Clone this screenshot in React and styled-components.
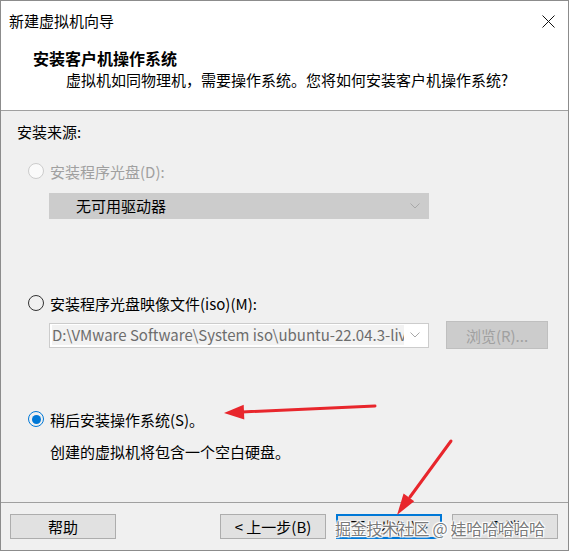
import React from 'react';
import styled, { createGlobalStyle } from 'styled-components';

const Global = createGlobalStyle`
  html, body {
    margin: 0;
    padding: 0;
    background: #ffffff;
  }
  body {
    font-family: "Noto Sans CJK SC", "Noto Sans", sans-serif;
    font-size: 15px;
    color: #000;
  }
`

const Janela = styled.div`
  position: relative;
  box-sizing: border-box;
  width: 569px;
  height: 551px;
  border: 1px solid #8c8c8c;
  display: flex;
  flex-direction: column;
  background: #f0f0f0;
  overflow: hidden;
`

const BarraTitulo = styled.div`
  height: 39px;
  background: #fff;
  display: flex;
  align-items: center;
  justify-content: space-between;
  padding: 0 13px 0 8px;
  font-size: 15px;
  line-height: 20px;
`

const Fechar = styled.svg`
  width: 13px;
  height: 13px;
  margin-top: 2px;
`

const Cabecalho = styled.div`
  height: 70px;
  background: #fff;
  border-bottom: 1px solid #a0a0a0;
  box-sizing: content-box;
  padding: 0 0 0 32px;
`

const Titulo = styled.div`
  font-weight: bold;
  font-size: 16px;
  line-height: 22px;
  margin-top: 7px;
`

const Subtitulo = styled.div`
  font-size: 15px;
  line-height: 22px;
  margin-left: 33px;
`

const Corpo = styled.div`
  flex: 1;
  padding: 10px 0 0 16px;
  display: flex;
  flex-direction: column;
`

const Rotulo = styled.div`
  line-height: 22px;
  margin-top: ${p => p.$top || 0}px;
  margin-left: ${p => p.$left || 0}px;
  color: ${p => (p.$disabled ? '#a0a0a0' : '#000')};
`

const LinhaRadio = styled.div`
  display: flex;
  align-items: center;
  gap: 6px;
  height: 22px;
  margin-top: ${p => p.$top}px;
  margin-left: 11px;
  color: ${p => (p.$disabled ? '#a0a0a0' : '#000')};
`

const Radio = styled.span`
  box-sizing: border-box;
  width: 16px;
  height: 16px;
  border-radius: 50%;
  border: 1px solid ${p => (p.$checked ? '#0078d7' : p.$disabled ? '#cccccc' : '#333')};
  background: ${p => (p.$disabled ? '#fafafa' : 'transparent')};
  display: flex;
  align-items: center;
  justify-content: center;
  &::after {
    content: '';
    display: ${p => (p.$checked ? 'block' : 'none')};
    width: 9px;
    height: 9px;
    border-radius: 50%;
    background: #0078d7;
  }
`

const LinhaCombo = styled.div`
  display: flex;
  align-items: center;
  gap: 17px;
  margin-top: ${p => p.$top}px;
  margin-left: 32px;
`

const Combo = styled.div`
  box-sizing: border-box;
  width: 380px;
  height: ${p => p.$h}px;
  border: 1px solid #cccccc;
  background: ${p => (p.$disabled ? '#cccccc' : '#fff')};
  display: flex;
  align-items: center;
  padding: 0 8px 0 ${p => p.$pad}px;
  line-height: 20px;
  color: ${p => (p.$gray ? '#6d6d6d' : '#000')};
`

const TextoCombo = styled.span`
  flex: 1;
  overflow: hidden;
  white-space: nowrap;
  background: ${p => (p.$fill ? '#f2f2f2' : 'transparent')};
  margin-right: 6px;
`

const Seta = styled.svg`
  width: 10px;
  height: 6px;
  flex: none;
`

const BotaoCinza = styled.div`
  box-sizing: border-box;
  width: 102px;
  height: 28px;
  border: 1px solid #bfbfbf;
  background: #cccccc;
  color: #a0a0a0;
  display: flex;
  align-items: center;
  justify-content: center;
`

const Rodape = styled.div`
  border-top: 1px solid #a0a0a0;
  display: flex;
  padding: 11px 10px 0 9px;
  box-sizing: border-box;
  height: 48px;
`

const Grupo = styled.div`
  margin-left: auto;
  display: flex;
  gap: 10px;
`

const Botao = styled.div`
  box-sizing: border-box;
  width: 106px;
  height: 25px;
  background: #e1e1e1;
  border: ${p => (p.$focus ? '2px solid #0078d7' : '1px solid #adadad')};
  display: flex;
  align-items: center;
  justify-content: center;
  line-height: 20px;
`

const MarcaDagua = styled.div`
  position: absolute;
  left: 334px;
  top: 516px;
  font-size: 16px;
  line-height: 22px;
  color: rgba(105, 105, 105, 0.9);
  letter-spacing: -0.3px;
  white-space: nowrap;
  text-shadow: 0 0 1px #fff, 0 0 2px #fff, 1px 1px 1px #fff, -1px -1px 1px #fff, 1px -1px 1px #fff, -1px 1px 1px #fff;
`

const Anotacao = styled.svg`
  position: absolute;
  left: -1px;
  top: -1px;
  width: 570px;
  height: 551px;
  pointer-events: none;
`

const Chevron = () => (
  <Seta viewBox="0 0 10 6">
    <path d="M0.5 0.5 L5 5 L9.5 0.5" fill="none" stroke="#a8a8a8" strokeWidth="1" />
  </Seta>
)

export default function App() {
  return (
    <>
      <Global />
      <Janela>
        <BarraTitulo>
          <span>新建虚拟机向导</span>
          <Fechar viewBox="0 0 13 13">
            <path d="M0.5 0.5 L12.5 12.5 M12.5 0.5 L0.5 12.5" stroke="#111" strokeWidth="1" />
          </Fechar>
        </BarraTitulo>
        <Cabecalho>
          <Titulo>安装客户机操作系统</Titulo>
          <Subtitulo>虚拟机如同物理机，需要操作系统。您将如何安装客户机操作系统?</Subtitulo>
        </Cabecalho>
        <Corpo>
          <Rotulo>安装来源:</Rotulo>
          <LinhaRadio $top={17} $disabled>
            <Radio $disabled />
            <span>安装程序光盘(D):</span>
          </LinhaRadio>
          <LinhaCombo $top={11}>
            <Combo $h={26} $pad={26} $disabled>
              <TextoCombo>无可用驱动器</TextoCombo>
              <Chevron />
            </Combo>
          </LinhaCombo>
          <LinhaRadio $top={73}>
            <Radio />
            <span>安装程序光盘映像文件(iso)(M):</span>
          </LinhaRadio>
          <LinhaCombo $top={7}>
            <Combo $h={25} $pad={2} $gray>
              <TextoCombo $fill>D:\VMware Software\System iso\ubuntu-22.04.3-live-server-amd64.iso</TextoCombo>
              <Chevron />
            </Combo>
            <BotaoCinza>浏览(R)...</BotaoCinza>
          </LinhaCombo>
          <LinhaRadio $top={59}>
            <Radio $checked />
            <span>稍后安装操作系统(S)。</span>
          </LinhaRadio>
          <Rotulo $top={11} $left={33}>创建的虚拟机将包含一个空白硬盘。</Rotulo>
        </Corpo>
        <Rodape>
          <Botao>帮助</Botao>
          <Grupo>
            <Botao>&lt; 上一步(B)</Botao>
            <Botao $focus>下一步(N) &gt;</Botao>
            <Botao>取消</Botao>
          </Grupo>
        </Rodape>
        <MarcaDagua>掘金技术社区 @ 娃哈哈哈哈哈</MarcaDagua>
        <Anotacao viewBox="0 0 570 551">
          <line x1="375" y1="406" x2="242" y2="412" stroke="#e8262c" strokeWidth="3" strokeLinecap="round" />
          <polygon points="224,413 244.3,419.5 243.7,404.7" fill="#e8262c" />
          <line x1="451" y1="441" x2="410" y2="497" stroke="#e8262c" strokeWidth="3" strokeLinecap="round" />
          <polygon points="397,515 414.2,501.2 403.6,493.6" fill="#e8262c" />
        </Anotacao>
      </Janela>
    </>
  );
}
